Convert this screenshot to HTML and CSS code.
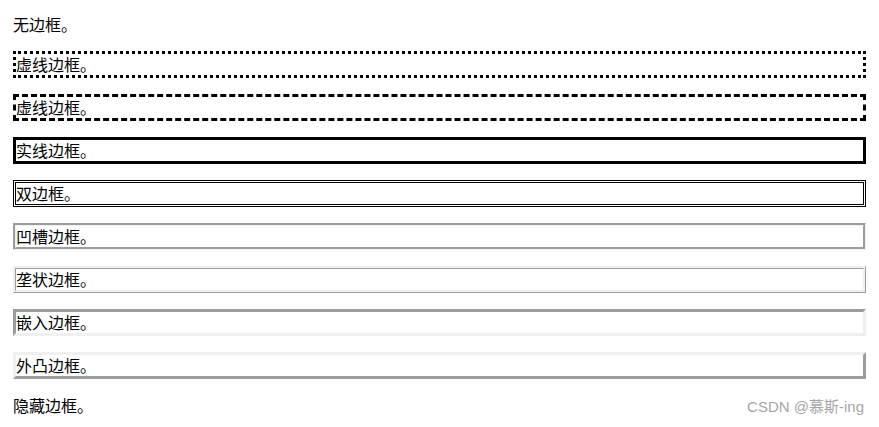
FILE: index.html
```html
<!DOCTYPE html>
<html lang="zh">
<head>
<meta charset="utf-8">
<link rel="stylesheet" href="styles.css">
</head>
<body>
<p class="none">无边框。</p>
<p class="dotted">虚线边框。</p>
<p class="dashed">虚线边框。</p>
<p class="solid">实线边框。</p>
<p class="double">双边框。</p>
<p class="groove">凹槽边框。</p>
<p class="ridge">垄状边框。</p>
<p class="inset">嵌入边框。</p>
<p class="outset">外凸边框。</p>
<p class="hidden">隐藏边框。</p>
<div class="watermark">CSDN @慕斯-ing</div>
</body>
</html>
```
FILE: styles.css
```css
html, body {
  margin: 0;
  background: #fff;
}
body {
  padding: 14px 13px 0;
  font-family: "Noto Sans CJK SC", "Noto Sans", sans-serif;
  font-size: 16px;
  line-height: 21px;
  color: #000;
  position: relative;
  min-height: 413px;
}
p {
  margin: 0 0 16px;
}
.none { border-style: none; }
.dotted { border: 3px dotted #000; }
.dashed { border: 3px dashed #000; }
.solid { border: 3px solid #000; }
.double { border: 3px double #000; }
.groove { border: 3px groove #f0f0f0; }
.ridge { border: 3px ridge #f0f0f0; }
.inset { border: 3px inset #f0f0f0; }
.outset { border: 3px outset #f0f0f0; }
.hidden { border: 0 hidden #000; }
.watermark {
  position: absolute;
  right: 15px;
  top: 397px;
  font-family: "Liberation Sans", "Noto Sans CJK SC", sans-serif;
  font-size: 15px;
  line-height: 20px;
  color: #a6a6a6;
}
```
